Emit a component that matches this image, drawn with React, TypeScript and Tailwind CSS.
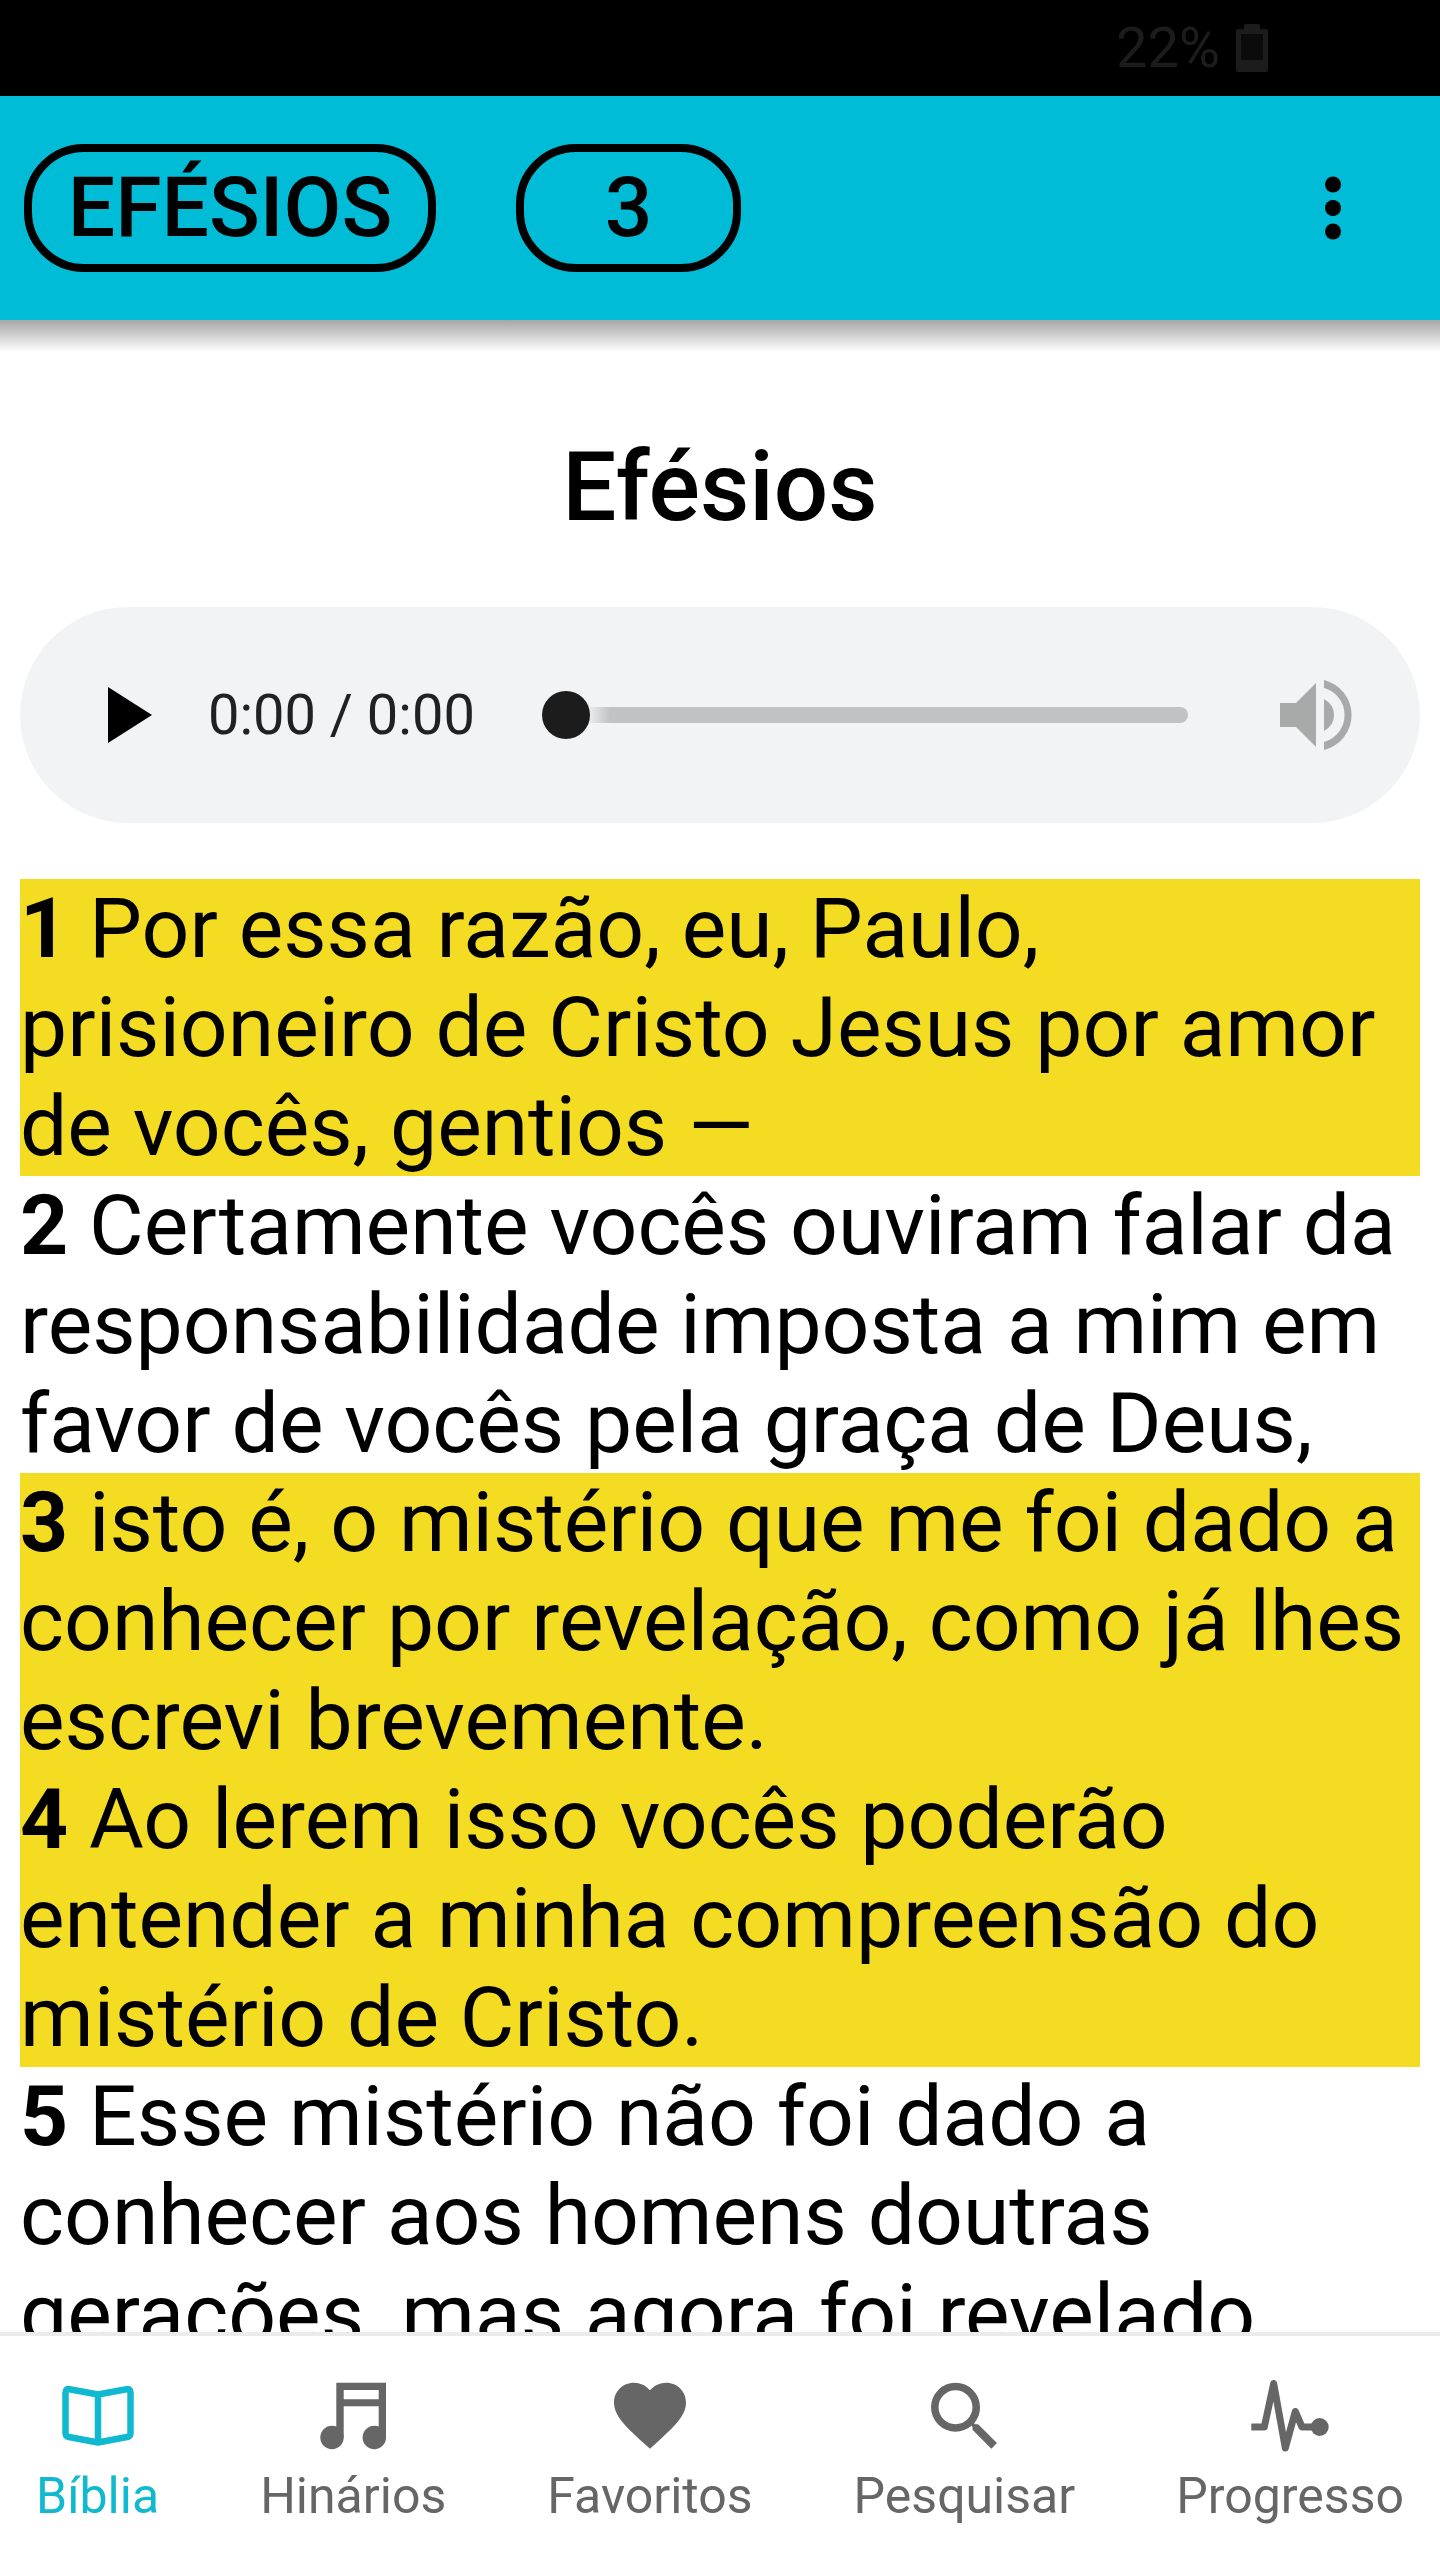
import type { ReactNode } from "react";

type Verse = { number: number; text: string; highlighted: boolean };

const verses: Verse[] = [
  { number: 1, text: "Por essa razão, eu, Paulo, prisioneiro de Cristo Jesus por amor de vocês, gentios —", highlighted: true },
  { number: 2, text: "Certamente vocês ouviram falar da responsabilidade imposta a mim em favor de vocês pela graça de Deus,", highlighted: false },
  { number: 3, text: "isto é, o mistério que me foi dado a conhecer por revelação, como já lhes escrevi brevemente.", highlighted: true },
  { number: 4, text: "Ao lerem isso vocês poderão entender a minha compreensão do mistério de Cristo.", highlighted: true },
  { number: 5, text: "Esse mistério não foi dado a conhecer aos homens doutras gerações, mas agora foi revelado", highlighted: false },
];

const tabs: { label: string; active?: boolean; icon: ReactNode }[] = [
  {
    label: "Bíblia",
    active: true,
    icon: (
      <path
        d="M48 26.500L19.500 21.200Q15.500 20.500 15.500 24.500V65Q15.500 68.500 19 69L48 74.500L77 69Q80.500 68.500 80.500 65V24.500Q80.500 20.500 76.500 21.200L48 26.500V74.500"
        fill="none"
        stroke="currentColor"
        strokeWidth="6.500"
        strokeLinejoin="round"
      />
    ),
  },
  {
    label: "Hinários",
    icon: (
      <g fill="currentColor">
        <path fillRule="evenodd" d="M31.300 14.700H81V69.500H73.700V38.300H38.700V69.500H31.300ZM38.700 22V31.300H73.700V22Z" />
        <circle cx="27" cy="69.500" r="11.700" />
        <circle cx="69.300" cy="69.500" r="11.700" />
      </g>
    ),
  },
  {
    label: "Favoritos",
    icon: (
      <path
        transform="translate(4.8 3.9) scale(3.6)"
        fill="currentColor"
        d="M12 21.350l-1.450-1.320C5.400 15.360 2 12.280 2 8.500 2 5.420 4.420 3 7.500 3c1.740 0 3.410.81 4.500 2.090C13.090 3.810 14.760 3 16.500 3 19.580 3 22 5.420 22 8.500c0 3.780-3.400 6.860-8.550 11.540L12 21.350z"
      />
    ),
  },
  {
    label: "Pesquisar",
    icon: (
      <path
        transform="translate(3.700 3.400) scale(3.770)"
        fill="currentColor"
        d="M15.500 14h-.79l-.28-.27A6.471 6.471 0 0 0 16 9.500 6.500 6.500 0 1 0 9.500 16c1.610 0 3.090-.59 4.230-1.570l.27.28v.79l5 4.990L20.490 19l-4.990-5zm-6 0C7.010 14 5 11.990 5 9.500S7.010 5 9.500 5 14 7.010 14 9.500 11.990 14 9.500 14z"
      />
    ),
  },
  {
    label: "Progresso",
    icon: (
      <>
        <path d="M9.300 59H22.300L31.700 15.500L43.300 80L53.300 43.500L60 59H77" fill="none" stroke="currentColor" strokeWidth="7" strokeLinejoin="round" />
        <circle cx="77.700" cy="59" r="9" fill="currentColor" />
      </>
    ),
  },
];

function StatusBar() {
  return (
    <div className="flex h-24 shrink-0 items-center justify-end gap-4 bg-black pr-[172px] text-[#1c1c1c]">
      <span className="text-[56px] leading-none">22%</span>
      <svg viewBox="0 0 32 48" className="h-12 w-8" aria-hidden="true">
        <path d="M8 2q0-2 2-2h12q2 0 2 2v3h6q2 0 2 2v39q0 2-2 2H2q-2 0-2-2V7q0-2 2-2h6z" fill="currentColor" />
        <path d="M5 10h22v26H5z" fill="#0b0b0b" />
      </svg>
    </div>
  );
}

function Header() {
  return (
    <header className="relative z-10 flex h-56 shrink-0 items-center bg-[#00bcd7] pl-6 pr-[59px] after:absolute after:inset-x-0 after:top-full after:h-8 after:bg-linear-to-b after:from-black/35 after:to-transparent">
      <button type="button" className="h-32 min-w-[412px] rounded-[60px] border-8 border-black px-8 text-[84px] leading-none font-medium uppercase">
        Efésios
      </button>
      <button type="button" className="ml-20 h-32 min-w-[225px] rounded-[60px] border-8 border-black px-8 text-[84px] leading-none font-medium">
        3
      </button>
      <button type="button" aria-label="Mais opções" className="ml-auto">
        <svg viewBox="0 0 96 96" className="size-24" aria-hidden="true">
          <circle cx="48" cy="24.500" r="8" />
          <circle cx="48" cy="48" r="8" />
          <circle cx="48" cy="71.500" r="8" />
        </svg>
      </button>
    </header>
  );
}

function AudioPlayer() {
  return (
    <div className="mt-16 flex h-54 items-center rounded-full bg-[#f1f3f4] pr-[68px] pl-17">
      <button type="button" aria-label="Reproduzir">
        <svg viewBox="0 0 96 96" className="size-24" aria-hidden="true">
          <path d="M20 20V76L64 48Z" />
        </svg>
      </button>
      <span className="ml-6 text-[56px] leading-none text-[#202124]">0:00 / 0:00</span>
      <input
        type="range"
        aria-label="Posição do áudio"
        min={0}
        max={100}
        defaultValue={0}
        className="mr-[92px] ml-[67px] h-4 min-w-0 flex-1 appearance-none rounded-full bg-[#c1c2c4] bg-linear-to-r from-[#f1f3f4] from-[44px] to-[#c1c2c4] to-[68px] [&::-webkit-slider-thumb]:size-12 [&::-webkit-slider-thumb]:appearance-none [&::-webkit-slider-thumb]:rounded-full [&::-webkit-slider-thumb]:bg-[#1c1c1c]"
      />
      <button type="button" aria-label="Volume" className="text-[#a8aaa9]">
        <svg viewBox="0 0 72 72" className="size-18" aria-hidden="true" fill="currentColor">
          <path d="M0 24H16L36 4V68L16 48H0Z" />
          <path d="M44 20Q54 25.500 54 36T44 52Z" />
          <path d="M44 1A36 36 0 0 1 44 71V63A28 28 0 0 0 44 9Z" />
        </svg>
      </button>
    </div>
  );
}

export default function App() {
  return (
    <div className="flex h-screen flex-col overflow-hidden bg-white font-[Roboto,sans-serif] text-black">
      <StatusBar />
      <Header />
      <main className="min-h-0 flex-1 overflow-y-auto px-5 pt-[111px] [scrollbar-width:none]">
        <h1 className="text-center text-[96px] leading-[112px] font-medium">Efésios</h1>
        <AudioPlayer />
        <div className="mt-14 text-[84px] leading-[99px]">
          {verses.map((verse) => (
            <p key={verse.number} className={verse.highlighted ? "bg-[#f4dc23]" : ""}>
              <b>{verse.number}</b> {verse.text}
            </p>
          ))}
        </div>
      </main>
      <nav className="flex shrink-0 justify-between border-t-4 border-[#ebebeb] bg-white px-9 pt-8 pb-9">
        {tabs.map((tab) => (
          <button
            key={tab.label}
            type="button"
            aria-current={tab.active ? "page" : undefined}
            className={`flex flex-col items-center gap-1 ${tab.active ? "text-[#11b9d0]" : "text-[#666666]"}`}
          >
            <svg viewBox="0 0 96 96" className="size-24" aria-hidden="true">
              {tab.icon}
            </svg>
            <span className="text-[50px] leading-[56px]">{tab.label}</span>
          </button>
        ))}
      </nav>
    </div>
  );
}
